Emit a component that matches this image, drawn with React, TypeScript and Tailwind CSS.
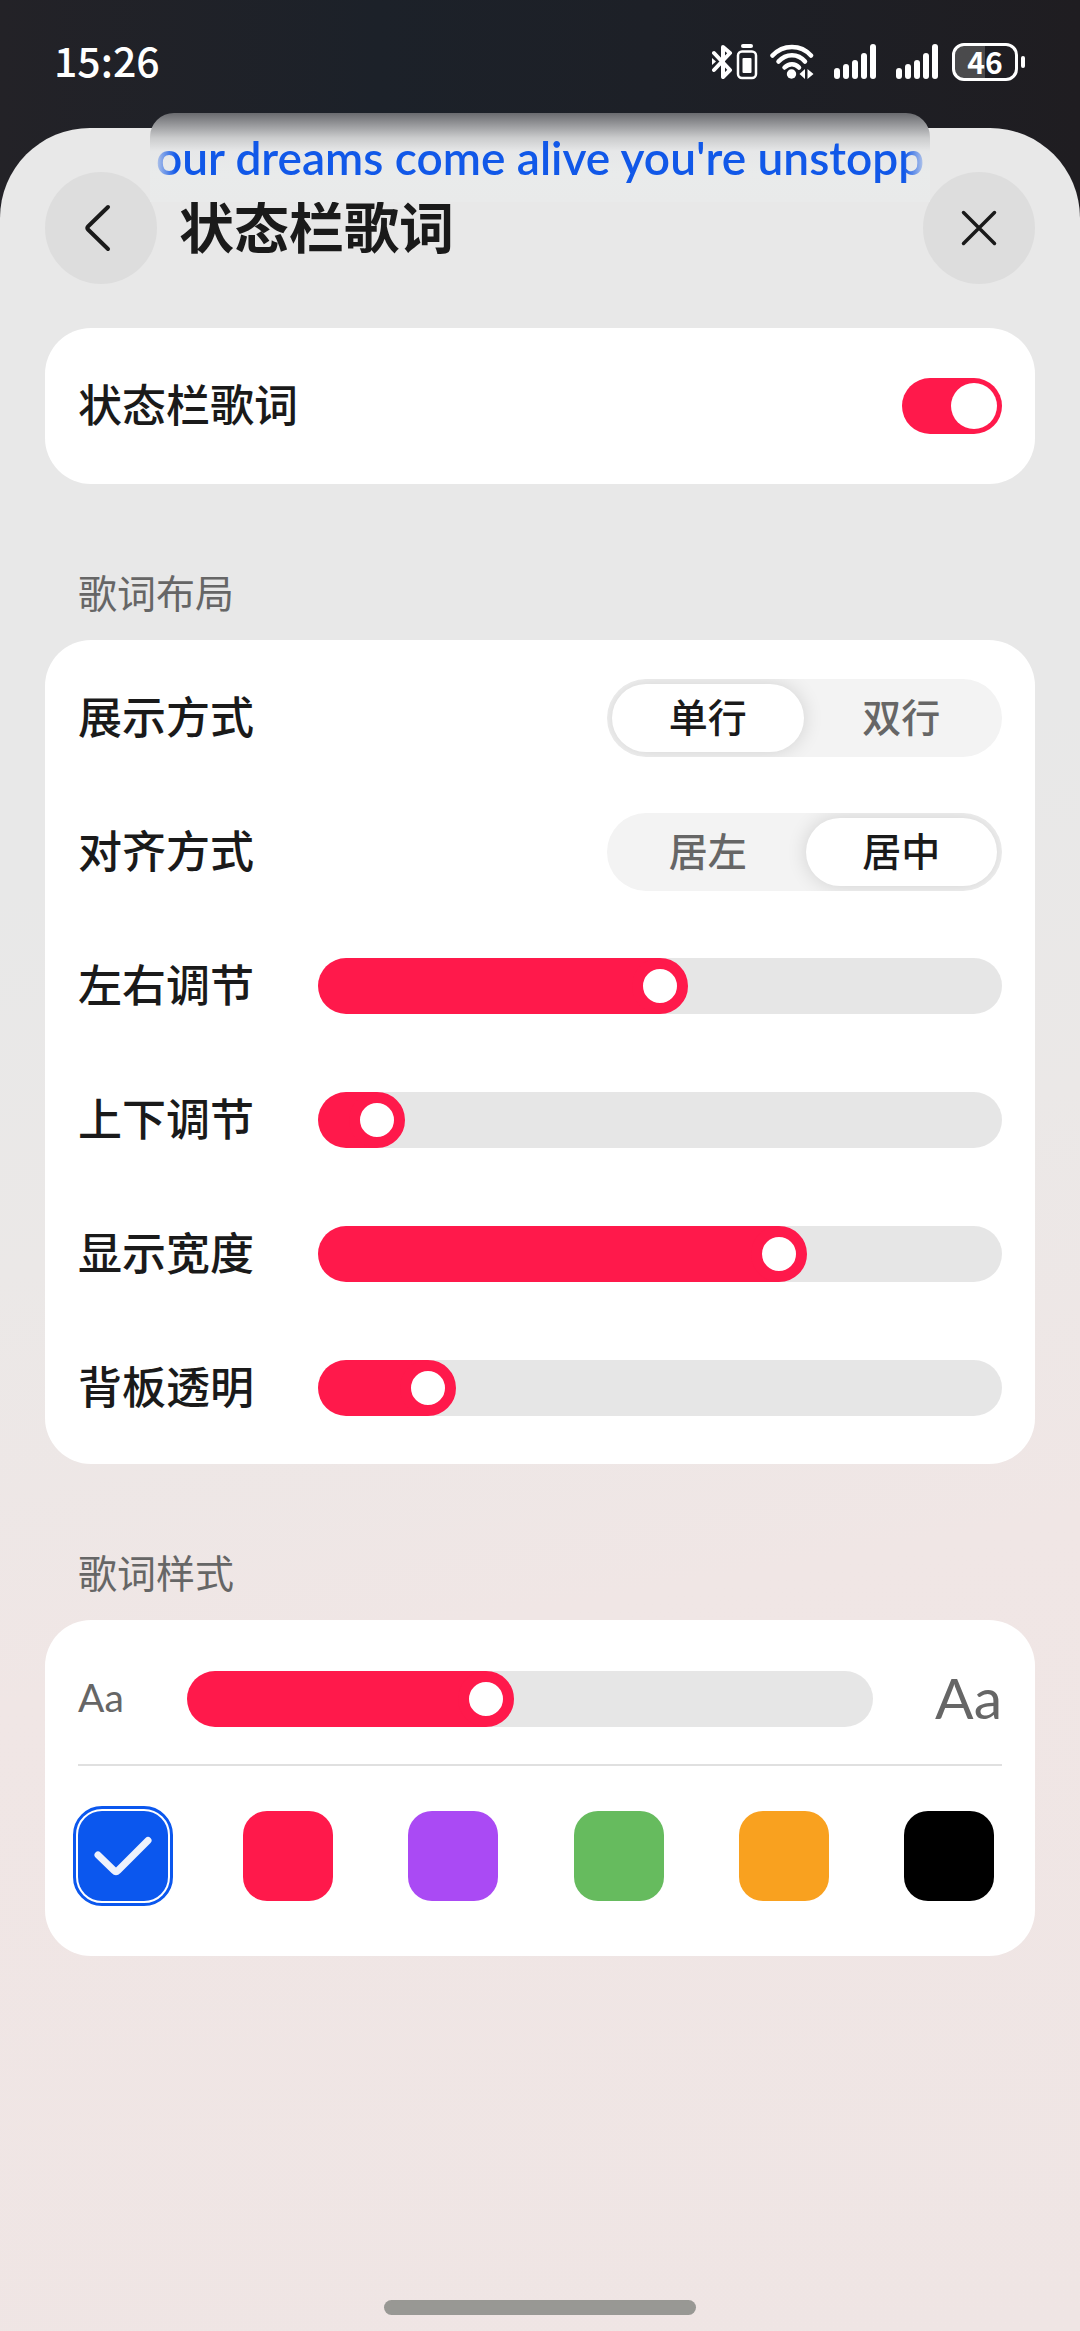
import { useState } from 'react';
import type { ReactNode } from 'react';

const COLORS = [
  { name: '蓝色', value: '#0b57ee' },
  { name: '红色', value: '#ff194b' },
  { name: '紫色', value: '#aa4af4' },
  { name: '绿色', value: '#66bb5e' },
  { name: '橙色', value: '#f9a11f' },
  { name: '黑色', value: '#000000' },
];

function SignalIcon() {
  return (
    <svg width="42" height="36" viewBox="0 0 42 36" fill="white">
      <rect x="0" y="24" width="6" height="11" rx="3" />
      <rect x="9" y="20" width="6" height="15" rx="3" />
      <rect x="18" y="16" width="6" height="19" rx="3" />
      <rect x="27" y="9" width="6" height="26" rx="3" />
      <rect x="36" y="0" width="6" height="35" rx="3" />
    </svg>
  );
}

function StatusBar() {
  return (
    <div className="flex h-32 items-center justify-between pb-1 pl-[54px] pr-[55px]">
      <span className="pb-1.5 text-[41px] leading-[52px] font-medium text-white">15:26</span>
      <div className="flex items-center">
        {/* Bluetooth with device battery */}
        <svg className="mr-3" width="46" height="36" viewBox="0 0 46 36" fill="none" stroke="white">
          <path d="M2 9L18 26L11 33V3L18 9L2 26" strokeWidth="4" strokeLinejoin="round" strokeLinecap="round" />
          <path d="M0 14L4 17.500L0 21Z" fill="white" stroke="none" />
          <rect x="29" y="0" width="12" height="4" rx="2" fill="white" stroke="none" />
          <rect x="26" y="7.500" width="18" height="26.500" rx="4" strokeWidth="2.500" />
          <rect x="30.500" y="14" width="9" height="15" rx="1" fill="white" stroke="none" />
        </svg>
        {/* Wi-Fi */}
        <svg className="mr-5" width="44" height="36" viewBox="0 0 44 36" fill="none" stroke="white">
          <path d="M2.500 11.500C13 0 31 0 41 11.500" strokeWidth="4.500" strokeLinecap="round" />
          <path d="M8.500 17.500C16 9 28 9 35 17.500" strokeWidth="4.500" strokeLinecap="round" />
          <path d="M14.500 23.500C19 19 25 19 29 23.500" strokeWidth="4.500" strokeLinecap="round" />
          <circle cx="21.500" cy="30" r="4.700" fill="white" stroke="none" />
          <path d="M35 25V35L29.500 30ZM37.500 25V35L43.500 30Z" fill="white" stroke="none" />
        </svg>
        <div className="mr-3.5 flex gap-5">
          <SignalIcon />
          <SignalIcon />
        </div>
        {/* Battery */}
        <div className="flex h-[38px] w-[66px] items-center justify-center rounded-xl border-3 border-white bg-linear-to-r from-[#4a4a4c] from-50% to-transparent to-50%">
          <span className="pb-0.5 text-[30px] leading-none font-bold text-white">46</span>
        </div>
        <div className="ml-[3px] h-3 w-1 rounded-full bg-white" />
      </div>
    </div>
  );
}

function LyricStrip() {
  return (
    <div className="absolute inset-x-[150px] top-[113px] z-10 h-[89px] rounded-t-3xl bg-[linear-gradient(180deg,#6a6b6f_0px,#98999c_12px,#cbcccd_25px,#e6e7e8_38px,#e9ebeb_60px,#e9eaea_100%)]">
      <p className="flex h-full items-center justify-center font-[Lato,'Noto_Sans_CJK_SC',sans-serif] text-[46px] leading-[60px] font-semibold whitespace-nowrap text-[#1158e8] [mask-image:linear-gradient(90deg,transparent,black_26px,black_calc(100%_-_26px),transparent)]">
        our dreams come alive you're unstopp
      </p>
    </div>
  );
}

function Card({ children }: { children: ReactNode }) {
  return <section className="rounded-[46px] bg-white px-[33px]">{children}</section>;
}

function SectionTitle({ children }: { children: ReactNode }) {
  return (
    <h2 className="flex h-[156px] items-center px-[33px] pt-[58px] text-[39px] leading-[56px] text-[#666]">{children}</h2>
  );
}

type SegmentProps = {
  label: string;
  options: string[];
  initial: string;
};

function Segment({ label, options, initial }: SegmentProps) {
  const [selected, setSelected] = useState(initial);

  return (
    <div role="radiogroup" aria-label={label} className="flex h-[134px] items-center justify-between">
      <span className="pb-1.5 text-[44px] leading-[60px] font-medium">{label}</span>
      <div className="grid h-[78px] w-[395px] grid-cols-2 gap-0.5 overflow-hidden rounded-full bg-[#f3f3f3] p-[5px]">
        {options.map((option) => (
          <label
            key={option}
            className="flex items-center justify-center rounded-full pb-1.5 text-[39px] leading-[56px] font-medium text-[#666] has-checked:bg-white has-checked:text-[#1a1a1a] has-checked:shadow-[0_0_20px_rgba(0,0,0,0.14)]"
          >
            <input
              type="radio"
              name={label}
              checked={selected === option}
              onChange={() => setSelected(option)}
              className="sr-only"
            />
            {option}
          </label>
        ))}
      </div>
    </div>
  );
}

function Slider({ id, label, initial }: { id: string; label?: string; initial: number }) {
  const [value, setValue] = useState(initial);
  const stop = `calc(28px + (100% - 56px) * ${value / 100})`;

  return (
    <input
      id={id}
      type="range"
      aria-label={label}
      value={value}
      onChange={(e) => setValue(Number(e.target.value))}
      className="h-14 min-w-0 flex-1 appearance-none rounded-full
        [&::-webkit-slider-thumb]:size-14 [&::-webkit-slider-thumb]:appearance-none [&::-webkit-slider-thumb]:rounded-full
        [&::-webkit-slider-thumb]:border-11 [&::-webkit-slider-thumb]:border-[#ff194b] [&::-webkit-slider-thumb]:bg-white"
      style={{ background: `linear-gradient(to right, #ff194b ${stop}, #e6e6e6 ${stop})` }}
    />
  );
}

function SliderRow({ id, label, initial }: { id: string; label: string; initial: number }) {
  return (
    <div className="flex h-[134px] items-center">
      <label htmlFor={id} className="w-60 pb-1.5 text-[44px] leading-[60px] font-medium">
        {label}
      </label>
      <Slider id={id} initial={initial} />
    </div>
  );
}

function ColorPicker() {
  const [color, setColor] = useState('#0b57ee');

  return (
    <div role="radiogroup" aria-label="歌词颜色" className="flex justify-between pt-[45px] pr-2 pb-[55px]">
      {COLORS.map(({ name, value }) => (
        <label
          key={value}
          className="flex size-[90px] items-center justify-center rounded-3xl outline-offset-2 has-checked:outline-3"
          style={{ backgroundColor: value, outlineColor: value }}
        >
          <input
            type="radio"
            name="lyric-color"
            aria-label={name}
            checked={color === value}
            onChange={() => setColor(value)}
            className="sr-only"
          />
          {color === value && (
            <svg width="58" height="40" viewBox="0 0 58 40" fill="none" stroke="#eef2fc" strokeWidth="7">
              <path d="M4 19L20 34.500Q22 36.500 24 34.500L54 4.500" strokeLinecap="round" />
            </svg>
          )}
        </label>
      ))}
    </div>
  );
}

export default function App() {
  const [enabled, setEnabled] = useState(true);

  return (
    <div className="relative flex min-h-screen flex-col bg-[linear-gradient(90deg,#232227,#1c2129_35%,#1d2027_60%,#1f1d21)] font-['Noto_Sans_CJK_SC',sans-serif] text-[#1a1a1a]">
      <StatusBar />
      <LyricStrip />

      <main className="flex flex-1 flex-col rounded-t-[90px] bg-[linear-gradient(170deg,#e8e8e8_32%,#ebe8e7_48%,#f0e6e5_66%,#efe5e4)] px-[45px]">
        <header className="flex items-center py-11">
          <button type="button" aria-label="返回" className="flex size-28 items-center justify-center rounded-full bg-[#dddddd]">
            <svg className="mr-2" width="28" height="50" viewBox="0 0 28 50" fill="none" stroke="#1a1a1a" strokeWidth="4">
              <path d="M25 4L5 23.500Q3.500 25 5 26.500L25 46" strokeLinecap="round" />
            </svg>
          </button>
          <h1 className="ml-[22px] flex-1 pb-2 text-[55px] leading-[72px] font-bold">状态栏歌词</h1>
          <button type="button" aria-label="关闭" className="flex size-28 items-center justify-center rounded-full bg-[#dddddd]">
            <svg width="36" height="36" viewBox="0 0 36 36" fill="none" stroke="#1a1a1a" strokeWidth="3.500">
              <path d="M2.500 2.500L33.500 33.500M33.500 2.500L2.500 33.500" strokeLinecap="round" />
            </svg>
          </button>
        </header>

        <Card>
          <div className="flex h-[156px] items-center justify-between">
            <label htmlFor="lyric-enabled" className="pb-1.5 text-[44px] leading-[60px] font-medium">
              状态栏歌词
            </label>
            <input
              id="lyric-enabled"
              type="checkbox"
              role="switch"
              checked={enabled}
              onChange={(e) => setEnabled(e.target.checked)}
              className="flex h-14 w-[100px] appearance-none items-center rounded-full bg-[#e6e6e6] px-[5px]
                before:size-[46px] before:rounded-full before:bg-white checked:justify-end checked:bg-[#ff194b]"
            />
          </div>
        </Card>

        <SectionTitle>歌词布局</SectionTitle>
        <Card>
          <div className="pt-[11px] pb-[9px]">
            <Segment label="展示方式" options={['单行', '双行']} initial="单行" />
            <Segment label="对齐方式" options={['居左', '居中']} initial="居中" />
            <SliderRow id="offset-x" label="左右调节" initial={50} />
            <SliderRow id="offset-y" label="上下调节" initial={5} />
            <SliderRow id="strip-width" label="显示宽度" initial={69} />
            <SliderRow id="strip-opacity" label="背板透明" initial={13} />
          </div>
        </Card>

        <SectionTitle>歌词样式</SectionTitle>
        <Card>
          <div className="flex h-[146px] items-center border-b-2 border-[#e0e0e0] pt-3.5 font-[Lato,sans-serif] text-[#666]">
            <span className="w-[109px] pb-1 text-[39px] leading-[56px]">Aa</span>
            <Slider id="font-size" label="字体大小" initial={43} />
            <span className="w-[129px] pb-1 text-right text-[57px] leading-[72px]">Aa</span>
          </div>
          <ColorPicker />
        </Card>

        <div className="mx-auto mt-auto mb-4 h-[15px] w-[312px] rounded-full bg-[#989894]" />
      </main>
    </div>
  );
}
